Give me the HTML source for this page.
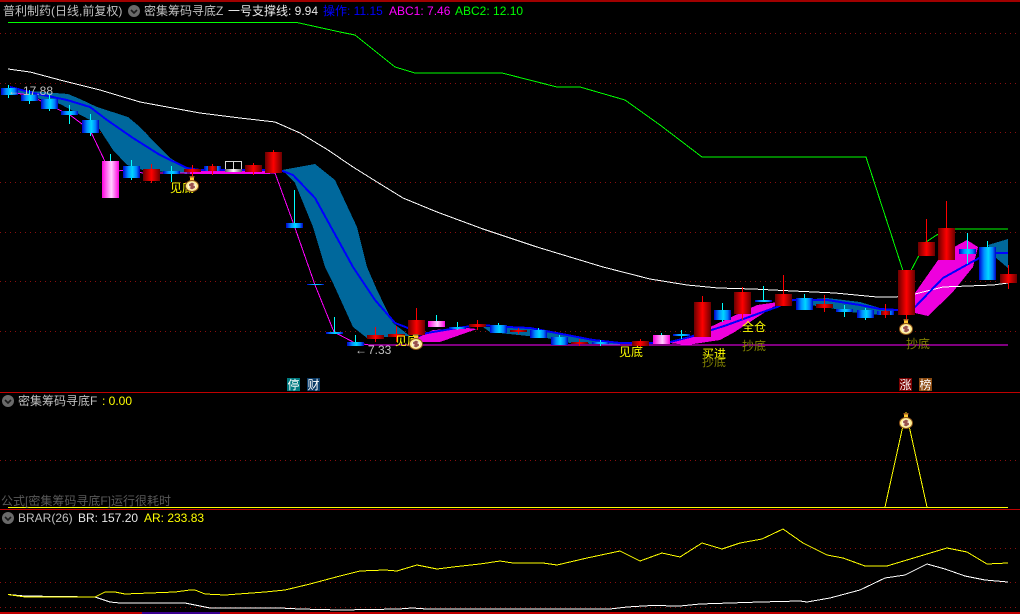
<!DOCTYPE html>
<html><head><meta charset="utf-8"><style>
html,body{margin:0;padding:0;background:#000;width:1020px;height:614px;overflow:hidden}
svg{display:block}
text{font-family:"Liberation Sans","WenQuanYi Zen Hei","Noto Sans CJK SC",sans-serif;font-size:12px}
.d{stroke:#8a0f0f;stroke-width:1;stroke-dasharray:1 4}
.w{stroke-width:1}
</style></head><body>
<svg width="1020" height="614" viewBox="0 0 1020 614" xmlns="http://www.w3.org/2000/svg">
<defs>
<linearGradient id="r"><stop offset="0" stop-color="#6a0000"/><stop offset=".5" stop-color="#ff0000"/><stop offset="1" stop-color="#6a0000"/></linearGradient>
<linearGradient id="b"><stop offset="0" stop-color="#0000d0"/><stop offset=".3" stop-color="#0090ff"/><stop offset=".55" stop-color="#00d8ff"/><stop offset=".8" stop-color="#0080ff"/><stop offset="1" stop-color="#0000c0"/></linearGradient>
<linearGradient id="p"><stop offset="0" stop-color="#ff00e0"/><stop offset=".55" stop-color="#ffd0ff"/><stop offset="1" stop-color="#ff00e0"/></linearGradient>
<linearGradient id="g"><stop offset="0" stop-color="#606060"/><stop offset=".5" stop-color="#ffffff"/><stop offset="1" stop-color="#606060"/></linearGradient>
<symbol id="bag" viewBox="0 0 14 16" overflow="visible">
<rect x="4.500" y="0" width="5" height="1.500" fill="#a05a20"/><rect x="5" y="1.500" width="4" height="3" fill="#ffc830"/>
<ellipse cx="7" cy="10" rx="6.500" ry="5.500" fill="#ffee90" stroke="#8a5018" stroke-width="1"/>
<ellipse cx="7" cy="10" rx="4.200" ry="3.800" fill="#fff8d8"/>
<path d="M9.200 8 H6 Q4.800 8 4.800 9 Q4.800 10 6.200 10 H8 Q9.200 10 9.200 11 Q9.200 12 8 12 H4.800 M7 6.800 V13.200" stroke="#8a3a3a" stroke-width="1.300" fill="none"/>
</symbol>
<symbol id="arr" viewBox="0 0 12 12"><circle cx="6" cy="6" r="6" fill="#6a6a6a"/><path d="M3 5 L6 8 L9 5" stroke="#1a1a1a" stroke-width="1.6" fill="none"/></symbol>
</defs>
<rect width="1020" height="614" fill="#000"/>

<g shape-rendering="crispEdges">
<path class="d" d="M0 33.5H1020M0 83.5H1020M0 132.5H1020M0 182.5H1020M0 232.5H1020M0 281.5H1020M0 331.5H1020M0 460.5H1020M0 548.5H1020M0 582.5H1020M0 607.5H1020"/>
<rect x="0" y="0" width="1020" height="2" fill="#a00000"/>
<rect x="0" y="392" width="1020" height="1" fill="#c00000"/>
<rect x="0" y="509" width="1020" height="1" fill="#c00000"/>
<rect x="0" y="612" width="1020" height="2" fill="#c00000"/>
<rect x="142" y="612" width="78" height="2" fill="#3a0090"/>

<!-- teal bands -->
<polygon fill="#00689c" points="17,90 43,92 68,94 80,99 97,107 128,117 140,127 157,145 170,158 187,168 187,174 143,170 127,165 113,150 100,130 90,120 60,104 17,93"/>
<polygon fill="#00689c" points="282,170 315,164 335,180 357,227 367,267 377,290 393,323 410,336 367,338 353,327 333,283 325,267 313,227 295,183"/>
<polygon fill="#00689c" points="483,327 530,328 567,335 593,340 620,343 620,345 570,343 547,338 490,332"/>
<polygon fill="#00689c" points="800,300 827,298 860,302 880,308 895,311 880,315 850,312 830,308 810,305"/>
<polygon fill="#00689c" points="988,245 1008,239 1008,268 995,257"/>
<!-- magenta bands -->
<polygon fill="#ee00dd" points="417,338 433,330 467,328 477,329 440,342 420,342"/>
<polygon fill="#ee00dd" points="670,343 693,335 757,305 793,300 773,307 733,333 720,340 687,345"/>
<polygon fill="#ee00dd" points="915,293 943,253 967,240 978,247 973,267 952,293 928,316 915,313"/>
<rect x="190" y="171" width="80" height="3" fill="#ee00dd"/>

<!-- lines -->
<polyline fill="none" stroke="#00ff00" class="w" points="8,22.5 297,22.5 340,32 355,35 395,67 415,73 502,73 557,87 580,87 625,100 660,125 702,157 866,157 906,280 926,242 946,229 1008,229"/>
<polyline fill="none" stroke="#ffffff" class="w" points="8,69 30,72 60,80 100,90 140,102 200,113 240,118 275,122 300,133 328,150 353,167 377,182 403,198 437,212 483,229 537,247 603,267 650,279 687,285 718,288 753,289 793,291 835,293 877,297 897,297 906,292 915,294 943,287 993,285 1008,283"/>
<polyline fill="none" stroke="#ff00ff" class="w" points="8,92 29,95 49,105 70,115 90,130 110,172 125,170 143,173 275,173 294,225 315,285 334,332 355,343 370,345 1008,345"/>
<polyline fill="none" stroke="#0000ff" stroke-width="2" points="10,87 33,93 67,100 90,107 107,120 133,138 160,155 187,168 200,170 280,170 293,175 315,198 353,267 375,300 395,323 408,328 417,335 433,332 457,328 480,325 507,327 530,328 567,335 593,340 620,343 650,343 670,342 690,337 727,325 760,313 777,307 793,300 827,300 860,305 880,309 898,310 906,312 915,307 943,278 970,263 985,255 996,253 1008,253"/>

<!-- sub chart -->
<polyline fill="none" stroke="#ffff00" class="w" points="885,507 906,412 927,507"/>
<rect x="8" y="507" width="1000" height="1" fill="#ffff00"/>
<!-- BRAR -->
<polyline fill="none" stroke="#ffffff" class="w" points="8,594.5 25,596 95,597 110,602 120,603 185,603 200,606 210,608 280,608 300,609 340,610 399,609 412,608 427,609 610,609 627,607 635,606.5 652,605.5 680,606 700,604 760,602 800,601 807,602 830,598 860,590 885,578 905,575 927,564 945,569 965,576 985,580 1008,582"/>
<polyline fill="none" stroke="#ffff00" class="w" points="8,594.5 25,597 95,597 105,592 115,592 125,594 175,592 190,590 195,590 205,594 225,595 265,592 285,590 310,584 340,576 360,571 385,570 397,571 417,565 437,569 453,567 480,564 500,561 513,563 543,563 557,565 587,558 620,551 640,561 662,553 680,557 702,543 722,549 740,543 762,539 783,529 803,543 827,555 843,558 865,566 887,566 947,548 967,552 987,564 1008,563"/>

<!-- wicks -->
<g stroke="#00ffff" class="w">
<path d="M8.500 85V98M29.500 90V104M49.500 95V111M69.500 105V124M90.500 114V136M110.500 154V198M131.500 160V180M171.500 166V182M294.500 190V228M315.500 284V285M334.500 317V334M355.500 335V346M436.500 315V327M457.500 322V330M498.500 323V333M538.500 328V338M559.500 335V345M600.500 340V346M661.500 333V344M681.500 330V339M722.500 303V322M763.500 286V302M804.500 294V310M844.500 305V317M865.500 308V320M967.500 233V264M987.500 241V280"/>
</g>
<g stroke="#ff0000" class="w">
<path d="M151.500 164V183M192.500 165V176M212.500 164V175M253.500 163V175M273.500 150V173M375.500 327V342M396.500 326V342M416.500 308V320M477.500 320V330M518.500 328V334M579.500 339V346M640.500 339V347M702.500 296V302M742.500 287V320M783.500 275V306M824.500 295V312M885.500 304V318M906.500 315V322M926.500 219V256M946.500 201V260M1008.500 265V289"/>
</g>

<!-- blue bodies -->
<g fill="url(#b)">
<rect x="1" y="88" width="17" height="7"/><rect x="21" y="95" width="17" height="6"/><rect x="41" y="99" width="17" height="10"/>
<rect x="61" y="111" width="17" height="4"/><rect x="82" y="120" width="17" height="13"/><rect x="123" y="166" width="17" height="12"/>
<rect x="163" y="171" width="17" height="3"/><rect x="204" y="166" width="17" height="5"/><rect x="286" y="223" width="17" height="5"/>
<rect x="307" y="284" width="17" height="1"/><rect x="326" y="332" width="17" height="2"/><rect x="347" y="342" width="17" height="4"/>
<rect x="449" y="327" width="17" height="2"/><rect x="490" y="325" width="17" height="8"/><rect x="530" y="330" width="17" height="8"/>
<rect x="551" y="337" width="17" height="8"/><rect x="592" y="342" width="17" height="2"/><rect x="673" y="334" width="17" height="2"/>
<rect x="714" y="310" width="17" height="10"/><rect x="755" y="300" width="17" height="2"/><rect x="796" y="298" width="17" height="12"/>
<rect x="836" y="309" width="17" height="3"/><rect x="857" y="310" width="17" height="8"/><rect x="877" y="311" width="17" height="4"/>
<rect x="959" y="249" width="17" height="5"/><rect x="979" y="247" width="17" height="33"/>
</g>
<!-- pink bodies -->
<g fill="url(#p)">
<rect x="102" y="161" width="17" height="37"/><rect x="428" y="321" width="17" height="6"/><rect x="653" y="335" width="17" height="9"/>
</g>
<!-- red bodies -->
<g fill="url(#r)">
<rect x="143" y="169" width="17" height="12"/><rect x="184" y="169" width="17" height="3"/><rect x="208" y="166" width="9" height="5"/>
<rect x="245" y="165" width="17" height="7"/><rect x="265" y="152" width="17" height="21"/><rect x="367" y="335" width="17" height="4"/>
<rect x="388" y="334" width="17" height="3"/><rect x="408" y="320" width="17" height="15"/><rect x="469" y="324" width="17" height="3"/>
<rect x="510" y="330" width="17" height="2"/><rect x="571" y="342" width="17" height="2"/><rect x="632" y="341" width="17" height="5"/>
<rect x="694" y="302" width="17" height="35"/><rect x="734" y="292" width="17" height="22"/><rect x="775" y="294" width="17" height="12"/>
<rect x="816" y="304" width="17" height="4"/><rect x="881" y="311" width="9" height="4"/><rect x="898" y="270" width="17" height="45"/>
<rect x="918" y="242" width="17" height="14"/><rect x="938" y="228" width="17" height="32"/><rect x="1000" y="274" width="17" height="9"/>
</g>
<!-- doji box -->
<rect x="225.500" y="161.500" width="16" height="8" fill="none" stroke="#d8d8d8"/>
<path d="M233.500 161V170" stroke="#d8d8d8"/>
<rect x="225" y="169" width="17" height="3" fill="url(#g)"/>

<!-- badges -->
<rect x="287" y="378" width="13" height="13" fill="#007a80"/><rect x="307" y="378" width="13" height="13" fill="#0a3a66"/>
<rect x="899" y="378" width="13" height="13" fill="#7a0000"/><rect x="919" y="378" width="13" height="13" fill="#8b4a10"/>
</g>

<!-- header -->
<text x="3" y="15" fill="#c0c0c0">普利制药(日线,前复权)</text>
<use href="#arr" x="128" y="5" width="12" height="12"/>
<text x="144" y="15" fill="#c0c0c0">密集筹码寻底Z</text>
<text x="228" y="15" fill="#e8e8e8">一号支撑线: 9.94</text>
<text x="323" y="15" fill="#0000ff">操作: 11.15</text>
<text x="389" y="15" fill="#ff00ff">ABC1: 7.46</text>
<text x="455" y="15" fill="#00ff00">ABC2: 12.10</text>

<text x="8" y="95" fill="#c0c0c0">←<tspan dx="3">17.88</tspan></text>
<text x="355" y="354" fill="#c0c0c0">←<tspan dx="1">7.33</tspan></text>

<text x="170" y="192" fill="#ffff00">见底</text>
<text x="395" y="345" fill="#ffff00">见底</text>
<text x="619" y="356" fill="#ffff00">见底</text>
<text x="702" y="358" fill="#ffff00">买进</text>
<text x="702" y="366" fill="#808000">抄底</text>
<text x="742" y="331" fill="#ffff00">全仓</text>
<text x="742" y="350" fill="#808000">抄底</text>
<text x="906" y="348" fill="#808000">抄底</text>

<text x="287.500" y="389" fill="#ffffff">停</text>
<text x="307.500" y="389" fill="#ffffff">财</text>
<text x="899.500" y="389" fill="#ffffff">涨</text>
<text x="919.500" y="389" fill="#ffffff">榜</text>

<use href="#bag" x="185" y="176" width="14" height="16"/>
<use href="#bag" x="409" y="334" width="14" height="16"/>
<use href="#bag" x="899" y="319" width="14" height="16"/>
<use href="#bag" x="899" y="413" width="14" height="16"/>

<!-- sub headers -->
<use href="#arr" x="2" y="395" width="12" height="12"/>
<text x="18" y="405" fill="#c0c0c0">密集筹码寻底F</text>
<text x="102" y="405" fill="#ffff00">: 0.00</text>
<text x="1" y="505" fill="#5a5a5a">公式[密集筹码寻底F]运行很耗时</text>
<use href="#arr" x="2" y="512" width="12" height="12"/>
<text x="18" y="522" fill="#c0c0c0">BRAR(26)</text>
<text x="78" y="522" fill="#e8e8e8">BR: 157.20</text>
<text x="144" y="522" fill="#ffff00">AR: 233.83</text>
</svg>
</body></html>
